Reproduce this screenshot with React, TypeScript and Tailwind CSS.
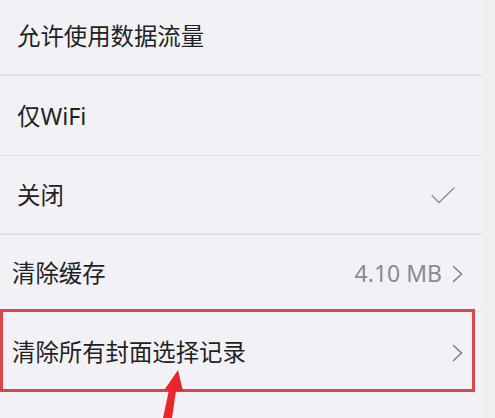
import React from "react";

const font = { fontFamily: '"Noto Sans", "Noto Sans CJK SC", sans-serif' };

function Check() {
  return (
    <svg width="24" height="17" viewBox="0 0 24 17" fill="none">
      <path d="M1 8.5 L8 15.5 L23 1" stroke="#8e8e93" strokeWidth="1.4" strokeLinecap="round" strokeLinejoin="round" />
    </svg>
  );
}

function Chevron() {
  return (
    <svg width="11" height="18" viewBox="0 0 11 18" fill="none">
      <path d="M1.5 1.5 L9.5 9 L1.5 16.5" stroke="#7d7d82" strokeWidth="1.5" strokeLinecap="round" strokeLinejoin="round" />
    </svg>
  );
}

function Sep() {
  return <div className="h-[1.5px] bg-[#e2e2e6] w-[482px]" />;
}

export default function App() {
  return (
    <div className="relative w-[495px] h-[418px] overflow-hidden bg-[#f2f2f6] flex" style={font}>
      <div className="w-[483px] flex flex-col">
        <div className="h-[74px] flex items-center pl-[17px] text-[23.4px] text-[#222222]">允许使用数据流量</div>
        <Sep />
        <div className="h-[79px] flex items-center pl-[17px] pt-[4px] text-[23.4px] text-[#222222]">仅WiFi</div>
        <Sep />
        <div className="h-[77px] flex items-center justify-between pl-[17px] pr-[28px] pt-[2px] text-[23.4px] text-[#222222]">
          <span>关闭</span>
          <Check />
        </div>
        <Sep />
        <div className="h-[76px] flex items-center justify-between pl-[12px] pr-[20px] pt-[2px] text-[23.4px] text-[#222222]">
          <span>清除缓存</span>
          <div className="flex items-center gap-[10px]">
            <span className="text-[23px] text-[#8a8a8e]">4.10 MB</span>
            <Chevron />
          </div>
        </div>
        <Sep />
        <div className="h-[82px] flex items-center justify-between pl-[12px] pr-[20px] text-[23.4px] text-[#222222]">
          <span>清除所有封面选择记录</span>
          <Chevron />
        </div>
      </div>
      <div className="flex-1 bg-[#efeff0]" />

      <div className="absolute left-0 top-[309px] w-[475px] h-[83px] border-[3px] border-[#d9454a] pointer-events-none" />

      <svg className="absolute left-[140px] top-[360px]" width="60" height="58" viewBox="0 0 60 58">
        <polygon points="38,10 25,29 29,30 23,58 32,58 36,31 43,31" fill="#e8262b" />
      </svg>
    </div>
  );
}
